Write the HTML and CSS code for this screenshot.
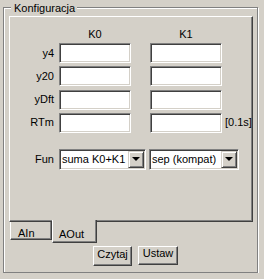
FILE: index.html
```html
<!DOCTYPE html>
<html lang="pl">
  <head>
    <meta charset="UTF-8" />
    <title>Konfiguracja</title>
    <link rel="stylesheet" href="styles.css">
  </head>
  <body>
    <div class="group">
      <div class="legend">Konfiguracja</div>

      <div class="panel">
        <div class="head">
          <span class="lbl"></span>
          <span class="col">K0</span>
          <span class="col">K1</span>
        </div>

        <div class="rows">
          <div class="row">
            <span class="lbl">y4</span>
            <span class="field"></span>
            <span class="field"></span>
          </div>
          <div class="row">
            <span class="lbl">y20</span>
            <span class="field"></span>
            <span class="field"></span>
          </div>
          <div class="row">
            <span class="lbl">yDft</span>
            <span class="field"></span>
            <span class="field"></span>
          </div>
          <div class="row">
            <span class="lbl">RTm</span>
            <span class="field"></span>
            <span class="field"></span>
            <span class="unit">[0.1s]</span>
          </div>
        </div>

        <div class="row fun">
          <span class="lbl">Fun</span>
          <div class="combo combo-fun">
            <span class="val">suma K0+K1</span>
            <span class="arrow"></span>
          </div>
          <div class="combo combo-mode">
            <span class="val">sep (kompat)</span>
            <span class="arrow"></span>
          </div>
        </div>
      </div>

      <div class="tabs">
        <div class="tab">AIn</div>
        <div class="tab active">AOut</div>
      </div>

      <div class="buttons">
        <button class="btn">Czytaj</button>
        <button class="btn">Ustaw</button>
      </div>
    </div>
  </body>
</html>
```

FILE: styles.css
```css
* {
  box-sizing: border-box;
}
body {
  margin: 0;
  background-color: #d4d0c8;
  color: #000000;
  font-family: "Liberation Sans", Arial, sans-serif;
  font-size: 11px;
  line-height: 13px;
}
.group {
  position: relative;
  margin: 7px 6px 0 3px;
  height: 266px;
  padding: 8px 4px 0 5px;
  border: 1px solid #808080;
  box-shadow: 1px 1px 0 #ffffff, inset 1px 1px 0 #ffffff;
}
.legend {
  position: absolute;
  top: -6px;
  left: 7px;
  padding: 0 2px 0 3px;
  background-color: #d4d0c8;
}
.panel {
  height: 206px;
  padding-top: 11px;
  overflow: hidden;
  border: 1px solid;
  border-color: #ffffff #404040 #404040 #ffffff;
  box-shadow: inset -1px -1px 0 #808080;
}
.head {
  display: flex;
  margin-bottom: 2px;
}
.rows {
  display: flex;
  flex-direction: column;
  gap: 3.34px;
}
.row {
  display: flex;
  align-items: center;
  height: 20px;
}
.lbl {
  width: 44px;
  margin-right: 5px;
  text-align: right;
  flex-shrink: 0;
}
.col {
  width: 72px;
  text-align: center;
}
.col + .col,
.field + .field {
  margin-left: 19px;
}
.field {
  width: 72px;
  height: 20px;
  flex-shrink: 0;
  background-color: #ffffff;
  border: 1px solid;
  border-color: #808080 #ffffff #ffffff #808080;
  box-shadow: inset 1px 1px 0 #404040, inset -1px -1px 0 #d4d0c8;
}
.unit {
  margin-left: 3px;
  white-space: nowrap;
}
.fun {
  height: 21px;
  margin-top: 16px;
}
.combo {
  display: flex;
  height: 21px;
  padding: 1px;
  flex-shrink: 0;
  background-color: #ffffff;
  border: 1px solid;
  border-color: #808080 #ffffff #ffffff #808080;
  box-shadow: inset 1px 1px 0 #404040, inset -1px -1px 0 #d4d0c8;
}
.combo-fun {
  width: 87px;
}
.combo-mode {
  width: 90px;
  margin-left: 3px;
}
.val {
  flex: 1;
  padding: 2px 0 0 1px;
  white-space: nowrap;
  overflow: hidden;
}
.arrow {
  display: flex;
  align-items: center;
  justify-content: center;
  width: 16px;
  background-color: #d4d0c8;
  border: 1px solid;
  border-color: #d4d0c8 #404040 #404040 #d4d0c8;
  box-shadow: inset 1px 1px 0 #ffffff, inset -1px -1px 0 #808080;
}
.arrow::after {
  content: "";
  border-style: solid;
  border-width: 4px 4px 0 4px;
  border-color: #000000 transparent transparent transparent;
}
.tabs {
  display: flex;
  align-items: flex-start;
  padding-left: 1px;
}
.tab {
  height: 18px;
  width: 42px;
  padding: 5px 0 0 7px;
  border-left: 1px solid #ffffff;
  border-right: 1px solid #404040;
  border-bottom: 1px solid #404040;
  box-shadow: inset -1px -1px 0 #808080;
}
.tab.active {
  position: relative;
  width: 45px;
  height: 23px;
  margin-top: -2px;
  padding: 8px 0 0 6px;
  background-color: #d4d0c8;
}
.buttons {
  display: flex;
  gap: 6px;
  margin-top: 3px;
  padding-left: 84px;
}
.btn {
  height: 20px;
  padding: 0 0 4px 0;
  font: inherit;
  color: #000000;
  background-color: #d4d0c8;
  border: 1px solid;
  border-color: #ffffff #404040 #404040 #ffffff;
  box-shadow: inset -1px -1px 0 #808080;
}
.btn:first-child {
  width: 39px;
}
.btn:last-child {
  width: 40px;
  height: 19px;
}
```
